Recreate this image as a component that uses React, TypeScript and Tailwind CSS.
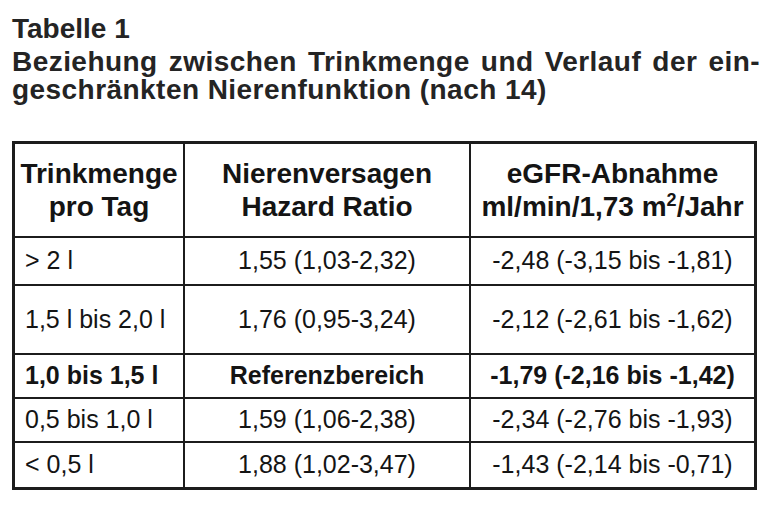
const rows = [
  { amount: "> 2 l", hazard: "1,55 (1,03-2,32)", egfr: "-2,48 (-3,15 bis -1,81)", h: "h-[46px]" },
  { amount: "1,5 l bis 2,0 l", hazard: "1,76 (0,95-3,24)", egfr: "-2,12 (-2,61 bis -1,62)", h: "h-[67px]" },
  { amount: "1,0 bis 1,5 l", hazard: "Referenzbereich", egfr: "-1,79 (-2,16 bis -1,42)", h: "h-[42px]", bold: true },
  { amount: "0,5 bis 1,0 l", hazard: "1,59 (1,06-2,38)", egfr: "-2,34 (-2,76 bis -1,93)", h: "h-[42px]" },
  { amount: "< 0,5 l", hazard: "1,88 (1,02-3,47)", egfr: "-1,43 (-2,14 bis -0,71)", h: "h-[44px]" },
];

export default function App() {
  return (
    <div className="w-[768px] h-[505px] bg-white font-['Liberation_Sans',Arial,sans-serif] overflow-hidden">
      <div className="ml-[12px] w-[748px] pt-[15px] text-[28px] leading-[28px] font-bold text-[#242424]">
        <div>Tabelle 1</div>
        <div className="mt-[5px] tracking-[0.45px]">
          <div className="text-justify [text-align-last:justify]">
            Beziehung zwischen Trinkmenge und Verlauf der ein-
          </div>
          <div>geschränkten Nierenfunktion (nach 14)</div>
        </div>
      </div>

      <div className="mt-[37px] ml-[12px] w-[745px] grid grid-cols-[168px_284px_283px] gap-[2px] bg-[#1c1c1c] border-[3px] border-[#1c1c1c] text-[#141414]">
        <div className="h-[92px] bg-white flex flex-col items-center justify-center text-[28px] leading-[33px] font-bold">
          <span>Trinkmenge</span>
          <span>pro Tag</span>
        </div>
        <div className="h-[92px] bg-white flex flex-col items-center justify-center text-[28px] leading-[33px] font-bold">
          <span>Nierenversagen</span>
          <span>Hazard Ratio</span>
        </div>
        <div className="h-[92px] bg-white flex flex-col items-center justify-center text-[28px] leading-[33px] font-bold">
          <span>eGFR-Abnahme</span>
          <span>
            ml/min/1,73 m<sup className="text-[18px] relative -top-[10px]">2</sup>/Jahr
          </span>
        </div>

        {rows.map((r) => (
          <>
            <div
              key={r.amount + "a"}
              className={`${r.h} bg-white flex items-center pl-[10px] text-[25px] ${r.bold ? "font-bold" : ""}`}
            >
              {r.amount}
            </div>
            <div
              key={r.amount + "b"}
              className={`${r.h} bg-white flex items-center justify-center text-[25px] ${r.bold ? "font-bold" : ""}`}
            >
              {r.hazard}
            </div>
            <div
              key={r.amount + "c"}
              className={`${r.h} bg-white flex items-center justify-center text-[25px] ${r.bold ? "font-bold" : ""}`}
            >
              {r.egfr}
            </div>
          </>
        ))}
      </div>
    </div>
  );
}
